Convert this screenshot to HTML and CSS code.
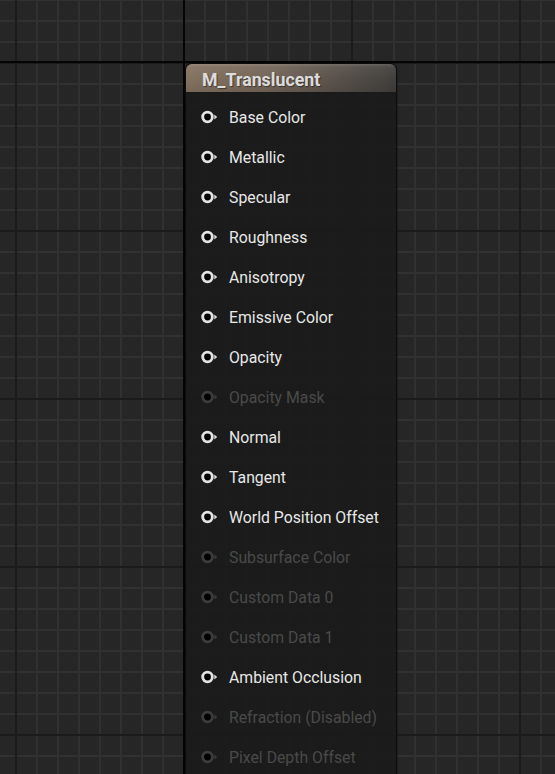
FILE: index.html
```html
<!DOCTYPE html>
<html>
<head>
<meta charset="utf-8">
<link rel="stylesheet" href="styles.css">
</head>
<body>
<div class="canvas">
  <div class="node">
    <div class="node-header">M_Translucent</div>
    <div class="node-body">
      <div class="pin-row"><svg class="pin" viewBox="0 0 18 14"><circle cx="6.5" cy="7" r="4.8"/><polygon points="13.3,4.5 16.2,7 13.3,9.5"/></svg><span>Base Color</span></div>
      <div class="pin-row"><svg class="pin" viewBox="0 0 18 14"><circle cx="6.5" cy="7" r="4.8"/><polygon points="13.3,4.5 16.2,7 13.3,9.5"/></svg><span>Metallic</span></div>
      <div class="pin-row"><svg class="pin" viewBox="0 0 18 14"><circle cx="6.5" cy="7" r="4.8"/><polygon points="13.3,4.5 16.2,7 13.3,9.5"/></svg><span>Specular</span></div>
      <div class="pin-row"><svg class="pin" viewBox="0 0 18 14"><circle cx="6.5" cy="7" r="4.8"/><polygon points="13.3,4.5 16.2,7 13.3,9.5"/></svg><span>Roughness</span></div>
      <div class="pin-row"><svg class="pin" viewBox="0 0 18 14"><circle cx="6.5" cy="7" r="4.8"/><polygon points="13.3,4.5 16.2,7 13.3,9.5"/></svg><span>Anisotropy</span></div>
      <div class="pin-row"><svg class="pin" viewBox="0 0 18 14"><circle cx="6.5" cy="7" r="4.8"/><polygon points="13.3,4.5 16.2,7 13.3,9.5"/></svg><span>Emissive Color</span></div>
      <div class="pin-row"><svg class="pin" viewBox="0 0 18 14"><circle cx="6.5" cy="7" r="4.8"/><polygon points="13.3,4.5 16.2,7 13.3,9.5"/></svg><span>Opacity</span></div>
      <div class="pin-row disabled"><svg class="pin" viewBox="0 0 18 14"><circle cx="6.5" cy="7" r="4.8"/><polygon points="13.3,4.5 16.2,7 13.3,9.5"/></svg><span>Opacity Mask</span></div>
      <div class="pin-row"><svg class="pin" viewBox="0 0 18 14"><circle cx="6.5" cy="7" r="4.8"/><polygon points="13.3,4.5 16.2,7 13.3,9.5"/></svg><span>Normal</span></div>
      <div class="pin-row"><svg class="pin" viewBox="0 0 18 14"><circle cx="6.5" cy="7" r="4.8"/><polygon points="13.3,4.5 16.2,7 13.3,9.5"/></svg><span>Tangent</span></div>
      <div class="pin-row"><svg class="pin" viewBox="0 0 18 14"><circle cx="6.5" cy="7" r="4.8"/><polygon points="13.3,4.5 16.2,7 13.3,9.5"/></svg><span>World Position Offset</span></div>
      <div class="pin-row disabled"><svg class="pin" viewBox="0 0 18 14"><circle cx="6.5" cy="7" r="4.8"/><polygon points="13.3,4.5 16.2,7 13.3,9.5"/></svg><span>Subsurface Color</span></div>
      <div class="pin-row disabled"><svg class="pin" viewBox="0 0 18 14"><circle cx="6.5" cy="7" r="4.8"/><polygon points="13.3,4.5 16.2,7 13.3,9.5"/></svg><span>Custom Data 0</span></div>
      <div class="pin-row disabled"><svg class="pin" viewBox="0 0 18 14"><circle cx="6.5" cy="7" r="4.8"/><polygon points="13.3,4.5 16.2,7 13.3,9.5"/></svg><span>Custom Data 1</span></div>
      <div class="pin-row"><svg class="pin" viewBox="0 0 18 14"><circle cx="6.5" cy="7" r="4.8"/><polygon points="13.3,4.5 16.2,7 13.3,9.5"/></svg><span>Ambient Occlusion</span></div>
      <div class="pin-row disabled"><svg class="pin" viewBox="0 0 18 14"><circle cx="6.5" cy="7" r="4.8"/><polygon points="13.3,4.5 16.2,7 13.3,9.5"/></svg><span>Refraction (Disabled)</span></div>
      <div class="pin-row disabled"><svg class="pin" viewBox="0 0 18 14"><circle cx="6.5" cy="7" r="4.8"/><polygon points="13.3,4.5 16.2,7 13.3,9.5"/></svg><span>Pixel Depth Offset</span></div>
    </div>
  </div>
</div>
</body>
</html>
```
FILE: styles.css
```css
html, body {
  margin: 0;
  padding: 0;
  background: #262626;
}
.canvas {
  position: relative;
  width: 555px;
  height: 774px;
  overflow: hidden;
  background-color: #262626;
  background-image:
    linear-gradient(#050505, #050505),
    linear-gradient(#050505, #050505),
    linear-gradient(to right, #1b1b1b 2px, transparent 2px),
    linear-gradient(to bottom, #1b1b1b 2px, transparent 2px),
    linear-gradient(to right, #313131 2px, transparent 2px),
    linear-gradient(to bottom, #313131 2px, transparent 2px);
  background-size: 2px 100%, 100% 2px, 168px 168px, 168px 168px, 21px 21px, 21px 21px;
  background-position: 183px 0, 0 61px, 15px 0, 0 62px, 15px 0, 0 20px;
  background-repeat: no-repeat, no-repeat, repeat, repeat, repeat, repeat;
  font-family: Roboto, "Liberation Sans", sans-serif;
}
.node {
  position: absolute;
  left: 185px;
  top: 63px;
  width: 210px;
  border: 1px solid #0c0c0c;
  border-radius: 7px 7px 0 0;
  background: rgba(26, 27, 26, 0.9);
  box-shadow: 0 0 2px rgba(0, 0, 0, 0.6);
  overflow: hidden;
}
.node-header {
  height: 29px;
  display: flex;
  align-items: center;
  padding-left: 16px;
  padding-top: 2px;
  box-sizing: border-box;
  font-size: 17.8px;
  font-weight: bold;
  color: #dcdcdc;
  text-shadow: 1px 1px 1px rgba(0, 0, 0, 0.45);
  background:
    linear-gradient(to bottom, rgba(255, 255, 255, 0.16) 0, rgba(255, 255, 255, 0.05) 3px, rgba(0, 0, 0, 0) 50%, rgba(0, 0, 0, 0.1) 100%),
    linear-gradient(to right, #857361 0%, #75665a 40%, #57504a 75%, #42403e 100%);
  border-bottom: 1px solid #1a1a1a;
}
.node-body {
  padding-top: 4px;
  display: flex;
  flex-direction: column;
}
.pin-row {
  height: 40px;
  display: flex;
  align-items: center;
  padding-left: 15px;
  font-size: 15.8px;
  color: #e8e8e8;
}
.pin {
  width: 18px;
  height: 14px;
  margin-right: 10px;
  flex: none;
}
.pin circle {
  fill: #000;
  stroke: #e2e2e2;
  stroke-width: 2.8;
}
.pin polygon {
  fill: #dedede;
}
.pin-row.disabled {
  color: #4a4a4a;
}
.pin-row.disabled .pin circle {
  stroke: #3c3c3c;
}
.pin-row.disabled .pin polygon {
  fill: #3c3c3c;
}
```
